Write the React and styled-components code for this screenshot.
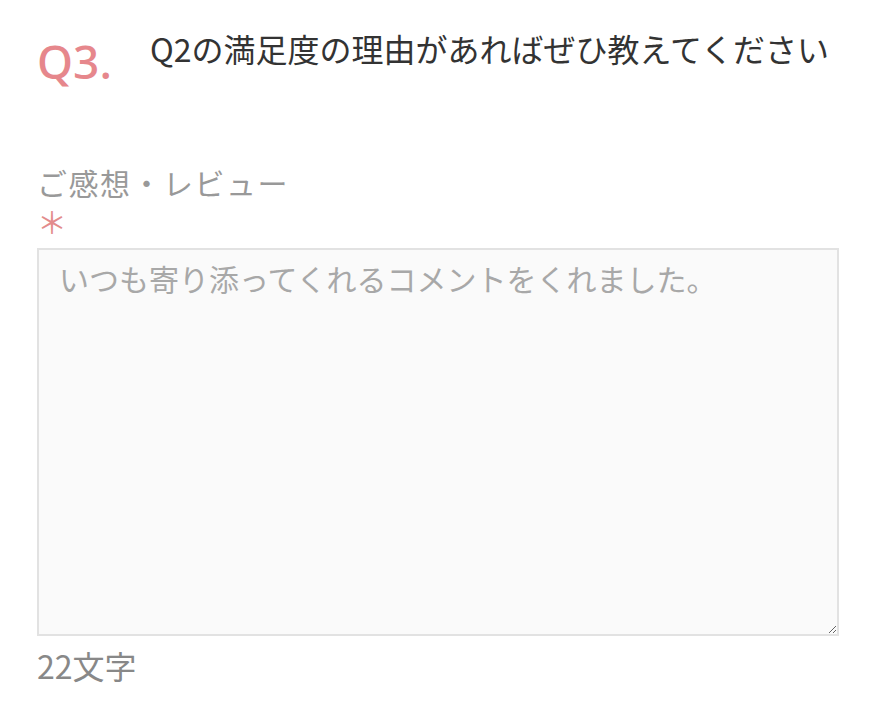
import React from "react";
import styled, { createGlobalStyle } from "styled-components";

const GlobalStyle = createGlobalStyle`
  body {
    margin: 0;
    background: #fff;
    font-family: "Noto Sans CJK JP", "Noto Sans", sans-serif;
  }
`;

const Page = styled.div`
  width: 802px;
  padding: 24px 0 0 37px;
`;

const QuestionRow = styled.div`
  display: flex;
  align-items: flex-start;
`;

const QNumber = styled.span`
  font-family: "Noto Sans", sans-serif;
  font-size: 46px;
  font-weight: 500;
  line-height: 1;
  color: #e6878c;
  width: 113px;
  margin-top: 14px;
`;

const QTitle = styled.h2`
  margin: 0;
  font-size: 32px;
  font-weight: 400;
  line-height: 48px;
  color: #333;
`;

const Field = styled.div`
  margin-top: 79px;
  display: flex;
  flex-direction: column;
`;

const Label = styled.label`
  font-size: 30px;
  line-height: 38px;
  color: #999;
  letter-spacing: 1.5px;
`;

const Required = styled.span`
  font-size: 30px;
  line-height: 36px;
  margin-top: 2px;
  color: #e38c8c;
  margin-bottom: 9px;
`;

const TextArea = styled.textarea`
  box-sizing: border-box;
  width: 802px;
  height: 388px;
  border: 2px solid #e2e2e2;
  background: #fafafa;
  padding: 8px 20px;
  font-family: "Noto Sans CJK JP", sans-serif;
  font-size: 30px;
  line-height: 40px;
  color: #333;
  outline: none;
  &::placeholder {
    color: #a8a8a8;
  }
`;

const Counter = styled.div`
  margin-top: 6px;
  font-size: 32px;
  line-height: 46px;
  color: #888;
`;

export default function App() {
  return (
    <>
      <GlobalStyle />
      <Page>
        <QuestionRow>
          <QNumber>Q3.</QNumber>
          <QTitle>Q2の満足度の理由があればぜひ教えてください</QTitle>
        </QuestionRow>
        <Field>
          <Label>ご感想・レビュー</Label>
          <Required>＊</Required>
          <TextArea placeholder="いつも寄り添ってくれるコメントをくれました。" />
          <Counter>22文字</Counter>
        </Field>
      </Page>
    </>
  );
}
